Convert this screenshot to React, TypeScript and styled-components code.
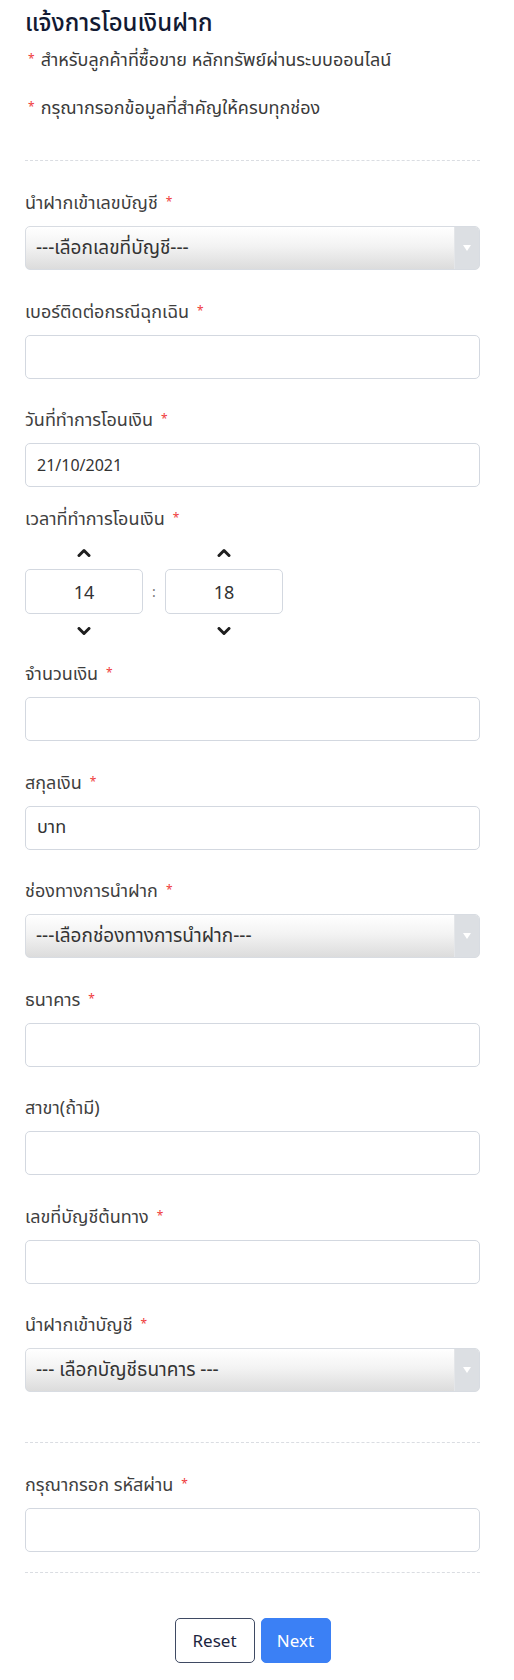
import styled, { createGlobalStyle } from "styled-components";

const GlobalStyle = createGlobalStyle`
  body {
    margin: 0;
    background: #ffffff;
    font-family: "Noto Sans", "Noto Sans Thai", "Open Sans", sans-serif;
    color: #3a3a3a;
  }
`;

export const Page = styled.form`
  padding: 5px 34px 22px 25px;
`;

export const Title = styled.h1`
  margin: 0;
  font-size: 24px;
  line-height: 34px;
  font-weight: 500;
  color: #121a33;
`;

export const NoteList = styled.div`
  display: flex;
  flex-direction: column;
  gap: 24px;
  margin-top: 8px;
`;

export const Note = styled.p`
  margin: 0;
  font-size: 18px;
  line-height: 24px;
  color: #3a3a3a;
`;

export const Star = styled.span<{ $gap?: number }>`
  color: #ef3b3b;
  font-size: 12px;
  vertical-align: top;
  margin: 0 ${({ $gap }) => $gap ?? 0}px 0 ${({ $gap }) => ($gap ? 3 : 8)}px;
`;

export const Divider = styled.hr<{ $top: number; $bottom: number }>`
  border: 0;
  border-top: 1px dashed #dadde2;
  margin: ${({ $top }) => $top}px 0 ${({ $bottom }) => $bottom}px;
`;

export const Field = styled.div<{ $space?: number }>`
  display: flex;
  flex-direction: column;
  margin-bottom: ${({ $space }) => $space ?? 28.5}px;
`;

export const Label = styled.label`
  font-size: 18px;
  line-height: 24px;
  color: #3f3f3f;
  margin-bottom: 12px;
`;

export const Input = styled.input<{ $size?: number }>`
  box-sizing: border-box;
  height: 44px;
  width: 100%;
  border: 1px solid #d3d8e0;
  border-radius: 5px;
  padding: 0 11px;
  font: inherit;
  font-size: ${({ $size }) => $size ?? 16}px;
  color: #333;
  background: #fff;
  outline: none;
`;

export const SelectBox = styled.div`
  box-sizing: border-box;
  height: 44px;
  display: flex;
  align-items: stretch;
  border: 1px solid #d8dce2;
  border-radius: 5px;
  overflow: hidden;
  background: linear-gradient(#ffffff 0%, #f3f3f3 45%, #dcdcdc 100%);
`;

export const SelectText = styled.span`
  flex: 1;
  display: flex;
  align-items: center;
  padding-left: 10px;
  font-size: 19px;
  color: #333;
`;

export const Caret = styled.span`
  width: 24px;
  display: flex;
  align-items: center;
  justify-content: center;
  background: #dcdfe3;
  border-left: 1px solid #e4e6e9;
`;

export const CaretTriangle = styled.span`
  width: 0;
  height: 0;
  border-left: 4px solid transparent;
  border-right: 4px solid transparent;
  border-top: 6px solid #ffffff;
`;

export const TimeRow = styled.div`
  display: flex;
  align-items: center;
`;

export const TimeColumn = styled.div`
  display: flex;
  flex-direction: column;
  align-items: center;
  width: 118px;
  gap: 4px;
`;

export const ArrowButton = styled.button`
  border: 0;
  background: none;
  padding: 0;
  height: 26px;
  display: flex;
  align-items: center;
  justify-content: center;
  color: #1f1f1f;
  cursor: pointer;
`;

export const TimeInput = styled(Input)`
  width: 118px;
  height: 45px;
  text-align: center;
  font-size: 18px;
`;

export const Colon = styled.span`
  width: 22px;
  text-align: center;
  font-size: 14px;
  color: #777;
`;

export const TimeLabel = styled(Label)`
  margin-bottom: 9px;
`;

export const Actions = styled.div`
  display: flex;
  justify-content: center;
  gap: 6px;
  margin-top: 45px;
`;

export const Button = styled.button<{ $primary?: boolean }>`
  box-sizing: border-box;
  height: 45px;
  min-width: ${({ $primary }) => ($primary ? 70 : 80)}px;
  padding: 0 14px;
  border-radius: 5px;
  font: inherit;
  font-size: 17px;
  cursor: pointer;
  border: ${({ $primary }) => ($primary ? "1px solid #3b80f5" : "1.5px solid #3f4a63")};
  background: ${({ $primary }) => ($primary ? "#3b80f5" : "#ffffff")};
  color: ${({ $primary }) => ($primary ? "#ffffff" : "#1c2540")};
`;

const Chevron = ({ up }: { up?: boolean }) => (
  <svg width="14" height="9" viewBox="0 0 14 9">
    <path
      d={up ? "M2 7.5 L7 2.5 L12 7.5" : "M2 1.5 L7 6.5 L12 1.5"}
      fill="none"
      stroke="currentColor"
      strokeWidth="3"
      strokeLinecap="round"
      strokeLinejoin="round"
    />
  </svg>
);

const Required = () => <Star>*</Star>;

const TextField = ({
  label,
  value,
  required = true,
  space,
  size,
}: {
  label: string;
  value?: string;
  required?: boolean;
  space?: number;
  size?: number;
}) => (
  <Field $space={space}>
    <Label>
      {label}
      {required && <Required />}
    </Label>
    <Input defaultValue={value} $size={size} />
  </Field>
);

const SelectField = ({ label, placeholder }: { label: string; placeholder: string }) => (
  <Field>
    <Label>
      {label}
      <Required />
    </Label>
    <SelectBox>
      <SelectText>{placeholder}</SelectText>
      <Caret>
        <CaretTriangle />
      </Caret>
    </SelectBox>
  </Field>
);

const TimeSpinner = ({ value }: { value: string }) => (
  <TimeColumn>
    <ArrowButton type="button">
      <Chevron up />
    </ArrowButton>
    <TimeInput defaultValue={value} />
    <ArrowButton type="button">
      <Chevron />
    </ArrowButton>
  </TimeColumn>
);

export default function App() {
  return (
    <>
      <GlobalStyle />
      <Page onSubmit={(e) => e.preventDefault()}>
        <Title>แจ้งการโอนเงินฝาก</Title>
        <NoteList>
          <Note>
            <Star $gap={6}>*</Star>สำหรับลูกค้าที่ซื้อขาย หลักทรัพย์ผ่านระบบออนไลน์
          </Note>
          <Note>
            <Star $gap={6}>*</Star>กรุณากรอกข้อมูลที่สำคัญให้ครบทุกช่อง
          </Note>
        </NoteList>

        <Divider $top={41} $bottom={29} />

        <SelectField label="นำฝากเข้าเลขบัญชี" placeholder="---เลือกเลขที่บัญชี---" />
        <TextField label="เบอร์ติดต่อกรณีฉุกเฉิน" />
        <TextField label="วันที่ทำการโอนเงิน" value="21/10/2021" space={19} />

        <Field $space={17}>
          <TimeLabel>
            เวลาที่ทำการโอนเงิน
            <Required />
          </TimeLabel>
          <TimeRow>
            <TimeSpinner value="14" />
            <Colon>:</Colon>
            <TimeSpinner value="18" />
          </TimeRow>
        </Field>

        <TextField label="จำนวนเงิน" />
        <TextField label="สกุลเงิน" value="บาท" size={18} />
        <SelectField label="ช่องทางการนำฝาก" placeholder="---เลือกช่องทางการนำฝาก---" />
        <TextField label="ธนาคาร" />
        <TextField label="สาขา(ถ้ามี)" required={false} />
        <TextField label="เลขที่บัญชีต้นทาง" />
        <SelectField label="นำฝากเข้าบัญชี" placeholder="--- เลือกบัญชีธนาคาร ---" />

        <Divider $top={50} $bottom={29} />

        <TextField label="กรุณากรอก รหัสผ่าน" space={0} />

        <Divider $top={20} $bottom={0} />

        <Actions>
          <Button type="reset">Reset</Button>
          <Button type="submit" $primary>
            Next
          </Button>
        </Actions>
      </Page>
    </>
  );
}
